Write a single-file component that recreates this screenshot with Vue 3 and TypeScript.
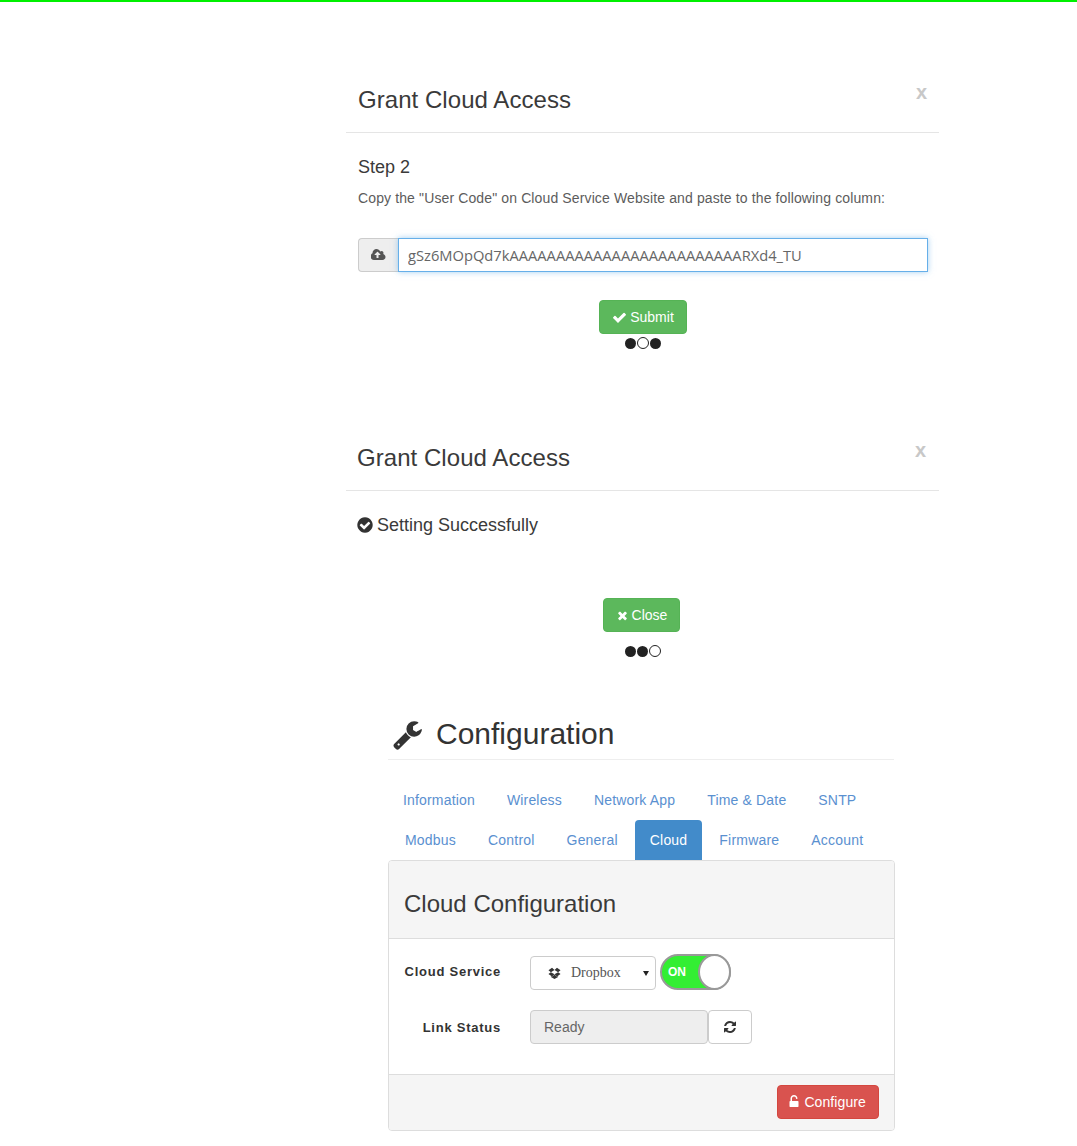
<template>
  <div class="page">
    <div class="top-line"></div>

    <section class="modal modal-first">
      <header class="modal-head">
        <h4>Grant Cloud Access</h4>
        <span class="close-x">x</span>
      </header>
      <div class="modal-body">
        <h5 class="step">Step 2</h5>
        <p class="hint">Copy the "User Code" on Cloud Service Website and paste to the following column:</p>
        <div class="code-group">
          <span class="addon">
            <svg class="ico-cloud" viewBox="0 0 1920 1792"><path :d="icons.cloudUpload" /></svg>
          </span>
          <input class="code-input" type="text" :value="userCode" />
        </div>
        <div class="actions actions-submit">
          <button class="btn green submit">
            <svg class="ico-check" viewBox="0 0 1792 1792"><path :d="icons.check" /></svg>
            Submit
          </button>
        </div>
        <div class="dots">
          <span v-for="n in 3" :key="n" :class="n === 2 ? 'dot open' : 'dot'"></span>
        </div>
      </div>
    </section>

    <section class="modal modal-second">
      <header class="modal-head">
        <h4>Grant Cloud Access</h4>
        <span class="close-x">x</span>
      </header>
      <div class="modal-body">
        <div class="success">
          <svg class="ico-ok" viewBox="0 0 1792 1792"><path :d="icons.checkCircle" /></svg>
          Setting Successfully
        </div>
        <div class="actions actions-close">
          <button class="btn green close-btn">
            <svg class="ico-times" viewBox="0 0 1792 1792"><path :d="icons.times" /></svg>
            Close
          </button>
        </div>
        <div class="dots dots-low">
          <span v-for="n in 3" :key="n" :class="n === 3 ? 'dot open' : 'dot'"></span>
        </div>
      </div>
    </section>

    <section class="config">
      <h1 class="config-title">
        <svg class="ico-wrench" viewBox="0 0 1792 1792"><path :d="icons.wrench" /></svg>
        Configuration
      </h1>
      <nav class="tabs">
        <div v-for="(row, i) in tabRows" :key="i" :class="['tab-row', 'tab-row-' + i]">
          <a v-for="tab in row" :key="tab" :class="['tab', { active: tab === 'Cloud' }]">{{ tab }}</a>
        </div>
      </nav>
      <div class="panel">
        <div class="panel-head"><h3>Cloud Configuration</h3></div>
        <div class="panel-body">
          <div class="form-row first-row">
            <label class="label">Cloud Service</label>
            <div class="select-box">
              <svg class="ico-dropbox" viewBox="0 0 1792 1792"><path :d="icons.dropbox" /></svg>
              <span class="select-text">Dropbox</span>
              <span class="select-caret"></span>
            </div>
            <div class="switch">
              <span class="switch-text">ON</span>
              <span class="knob"></span>
            </div>
          </div>
          <div class="form-row second-row">
            <label class="label">Link Status</label>
            <div class="status-box">Ready</div>
            <button class="refresh">
              <svg class="ico-refresh" viewBox="0 0 1792 1792"><path :d="icons.refresh" /></svg>
            </button>
          </div>
        </div>
        <div class="panel-foot">
          <button class="btn red">
            <svg class="ico-unlock" viewBox="0 0 1792 1792"><path :d="icons.unlock" /></svg>
            Configure
          </button>
        </div>
      </div>
    </section>
  </div>
</template>

<script setup lang="ts">
const userCode = "gSz6MOpQd7kAAAAAAAAAAAAAAAAAAAAAAAAARXd4_TU";

const tabRows: string[][] = [
  ["Information", "Wireless", "Network App", "Time & Date", "SNTP"],
  ["Modbus", "Control", "General", "Cloud", "Firmware", "Account"],
];

// font-awesome 4 glyph shapes
const icons = {
  cloudUpload:
    "M1216 864q0-14-9-23l-352-352q-9-9-23-9t-23 9l-351 351q-10 12-10 24 0 14 9 23t23 9h224v352q0 13 9.5 22.5t22.5 9.5h192q13 0 22.5-9.5t9.5-22.5v-352h224q13 0 22.5-9.5t9.5-22.5zm640 288q0 159-112.5 271.5t-271.5 112.5h-1088q-185 0-316.5-131.5t-131.5-316.5q0-130 70-240t188-165q-2-30-2-43 0-212 150-362t362-150q156 0 285.5 87t188.5 231q71-62 166-62 106 0 181 75t75 181q0 76-41 138 130 31 213.5 135.5t83.5 238.5z",
  check:
    "M1671 566q0 40-28 68l-724 724-136 136q-28 28-68 28t-68-28l-136-136-362-362q-28-28-28-68t28-68l136-136q28-28 68-28t68 28l294 295 656-657q28-28 68-28t68 28l136 136q28 28 28 68z",
  checkCircle:
    "M1412 734q0-28-18-46l-91-90q-19-19-45-19t-45 19l-408 407-226-226q-19-19-45-19t-45 19l-91 90q-18 18-18 46 0 27 18 45l362 362q19 19 45 19 27 0 46-19l543-543q18-18 18-45zm252 162q0 209-103 385.5t-279.5 279.5-385.5 103-385.5-103-279.5-279.5-103-385.5 103-385.5 279.5-279.5 385.5-103 385.5 103 279.5 279.5 103 385.5z",
  times:
    "M1490 1322q0 40-28 68l-136 136q-28 28-68 28t-68-28l-294-294-294 294q-28 28-68 28t-68-28l-136-136q-28-28-28-68t28-68l294-294-294-294q-28-28-28-68t28-68l136-136q28-28 68-28t68 28l294 294 294-294q28-28 68-28t68 28l136 136q28 28 28 68t-28 68l-294 294 294 294q28 28 28 68z",
  wrench:
    "M448 1472q0-26-19-45t-45-19-45 19-19 45 19 45 45 19 45-19 19-45zm644-420l-682 682q-37 37-90 37-52 0-91-37l-106-108q-38-36-38-90 0-53 38-91l681-681q39 98 114.5 173.5t173.5 114.5zm634-435q0 39-23 106-47 134-164.5 217.5t-258.5 83.5q-185 0-316.5-131.5t-131.5-316.5 131.5-316.5 316.5-131.5q58 0 121.5 16.5t107.5 46.5q16 11 16 28t-16 28l-293 169v224l193 107q5-3 79-48.5t135.5-81 70.5-35.5q15 0 23.5 10t8.5 25z",
  dropbox:
    "M402 707l494 305-342 285-490-319zm986 555v108l-490 293v1l-1-1-1 1v-1l-489-293v-108l147 96 342-284v-2l1 1 1-1v2l343 284zm-834-1144l342 285-494 304-338-270zm836 589l338 271-489 319-343-285zm-151-589l489 319-338 270-494-304z",
  refresh:
    "M1639 1056q0 5-1 7-64 268-268 434.5t-478 166.5q-146 0-282.5-55t-243.5-157l-129 129q-19 19-45 19t-45-19-19-45v-448q0-26 19-45t45-19h448q26 0 45 19t19 45-19 45l-137 137q71 66 161 102t187 36q134 0 250-65t186-179q11-17 53-117 8-23 30-23h192q13 0 22.5 9.5t9.5 22.5zm25-800v448q0 26-19 45t-45 19h-448q-26 0-45-19t-19-45 19-45l138-138q-148-137-349-137-134 0-250 65t-186 179q-11 17-53 117-8 23-30 23h-199q-13 0-22.5-9.5t-9.5-22.5v-7q65-268 270-434.5t480-166.5q146 0 284 55.5t245 156.5l130-129q19-19 45-19t45 19 19 45z",
  unlock:
    "M1376 768q40 0 68 28t28 68v576q0 40-28 68t-68 28h-960q-40 0-68-28t-28-68v-576q0-40 28-68t68-28h32v-320q0-185 131.5-316.5t316.5-131.5 316.5 131.5 131.5 316.5q0 26-19 45t-45 19h-64q-26 0-45-19t-19-45q0-106-75-181t-181-75-181 75-75 181v320h736z",
};
</script>

<style>
html,
body {
  background: #fff;
}
</style>

<style scoped>
.page {
  height: 1146px;
  overflow: hidden;
  font-family: "Liberation Sans", Arial, sans-serif;
  color: #333;
  font-size: 14px;
}

.top-line {
  height: 2px;
  background: #00f000;
}

svg {
  fill: currentColor;
  display: inline-block;
  flex: none;
}

/* dialogs */
.modal {
  width: 593px;
  margin-left: 346px;
}

.modal-first {
  margin-top: 70px;
}

.modal-second {
  margin-top: 81px;
}

.modal-head {
  display: flex;
  justify-content: space-between;
  align-items: flex-start;
  padding: 11px 12px 15px;
  border-bottom: 1px solid #e5e5e5;
}

.modal-second .modal-head {
  padding-left: 11px;
  padding-right: 13px;
}

.modal-head h4 {
  margin: 0;
  font-size: 24px;
  font-weight: 400;
  letter-spacing: 0.05px;
  line-height: 34px;
  color: #3a3a3a;
}

.close-x {
  font-size: 20px;
  font-weight: 700;
  line-height: 18px;
  color: #c8c8c8;
}

.modal-body {
  padding: 0 11px 0 12px;
}

.step {
  margin: 24px 0 0;
  font-size: 18px;
  font-weight: 400;
  line-height: 20px;
  color: #3a3a3a;
}

.hint {
  margin: 11px 0 0;
  font-size: 14px;
  letter-spacing: 0.125px;
  line-height: 20px;
  color: #5c5c5c;
}

.code-group {
  display: flex;
  height: 34px;
  margin-top: 30px;
}

.addon {
  width: 40px;
  display: flex;
  align-items: center;
  justify-content: center;
  box-sizing: border-box;
  background: #eee;
  border: 1px solid #ccc;
  border-right: 0;
  border-radius: 4px 0 0 4px;
  color: #555;
}

.ico-cloud {
  width: 15px;
  height: 14px;
}

.code-input {
  flex: 1;
  min-width: 0;
  box-sizing: border-box;
  padding: 0 9px;
  font-family: "Open Sans", sans-serif;
  font-size: 14.7px;
  color: #666;
  background: #fff;
  border: 1px solid #66afe9;
  outline: 0;
  box-shadow: 0 0 6px rgba(102, 175, 233, 0.6);
}

.actions {
  display: flex;
  justify-content: center;
}

.actions-submit {
  margin-top: 28px;
}

.actions-close {
  margin-top: 63px;
  padding-right: 3px;
}

.btn {
  display: inline-flex;
  align-items: center;
  justify-content: center;
  gap: 3px;
  height: 34px;
  box-sizing: border-box;
  padding: 0 12px;
  font-family: inherit;
  font-size: 14px;
  color: #fff;
  border: 1px solid transparent;
  border-radius: 4px;
}

.green {
  background: #5cb85c;
  border-color: #55b355;
}

.red {
  background: #d9534f;
  border-color: #d4473f;
  letter-spacing: 0.1px;
}

.ico-check {
  width: 15px;
  height: 15px;
}

.ico-times {
  width: 13px;
  height: 13px;
}

.ico-unlock {
  width: 14px;
  height: 14px;
  margin-left: -3px;
}

.dots {
  display: flex;
  justify-content: center;
  align-items: center;
  height: 12px;
  margin-top: 3px;
}

.dots-low {
  margin-top: 13px;
}

.dot {
  width: 11px;
  height: 11px;
  border-radius: 50%;
  background: #222;
  margin: 0 0.5px;
}

.dot.open {
  box-sizing: border-box;
  width: 12px;
  height: 12px;
  background: #fff;
  border: 1px solid #222;
}

.success {
  display: flex;
  align-items: center;
  gap: 3px;
  margin-top: 24px;
  font-size: 18px;
  line-height: 20px;
  color: #3a3a3a;
}

.ico-ok {
  width: 18px;
  height: 18px;
  margin-left: -2px;
  color: #333;
}

/* configuration */
.config {
  width: 507px;
  margin: 48px 0 0 388px;
}

.config-title {
  display: flex;
  align-items: center;
  gap: 13px;
  height: 50px;
  margin: 0 1px 0 0;
  padding: 4px 0 0 4px;
  font-size: 30px;
  font-weight: 400;
  border-bottom: 1px solid #eee;
}

.ico-wrench {
  width: 31px;
  height: 31px;
  color: #333;
}

.tabs {
  margin-top: 20px;
}

.tab-row {
  display: flex;
  gap: 2px;
}

.tab-row-1 {
  padding-left: 2px;
}

.tab {
  height: 40px;
  box-sizing: border-box;
  padding: 0 15px;
  line-height: 40px;
  letter-spacing: 0.17px;
  color: #5a90d0;
  border-radius: 4px 4px 0 0;
  white-space: nowrap;
}

.tab-row-1 .tab {
  letter-spacing: 0.2px;
}

.tab.active {
  background: #428bca;
  color: #fff;
}

.panel {
  border: 1px solid #ddd;
  border-radius: 4px;
}

.panel-head {
  height: 78px;
  display: flex;
  align-items: center;
  padding: 9px 15px 0;
  box-sizing: border-box;
  background: #f5f5f5;
  border-bottom: 1px solid #ddd;
  border-radius: 3px 3px 0 0;
}

.panel-head h3 {
  margin: 0;
  font-size: 24px;
  font-weight: 400;
  color: #3a3a3a;
}

.panel-body {
  height: 135px;
  box-sizing: border-box;
  padding-top: 17px;
}

.form-row {
  display: flex;
  align-items: center;
  height: 34px;
}

.second-row {
  margin-top: 20px;
}

.label {
  width: 112px;
  margin-right: 29px;
  text-align: right;
  font-size: 13px;
  font-weight: 700;
  letter-spacing: 0.75px;
}

.first-row .label {
  margin-top: -4px;
}

.select-box {
  width: 126px;
  height: 34px;
  box-sizing: border-box;
  display: flex;
  align-items: center;
  padding-left: 17px;
  background: #fff;
  border: 1px solid #ccc;
  border-radius: 4px;
  position: relative;
}

.ico-dropbox {
  width: 13px;
  height: 13px;
  color: #333;
}

.select-text {
  margin-left: 10px;
  font-family: "Liberation Serif", serif;
  font-size: 14px;
  color: #555;
}

.select-caret {
  position: absolute;
  right: 6px;
  top: 14px;
  width: 0;
  height: 0;
  border: 3px solid transparent;
  border-top: 5px solid #222;
  border-bottom: 0;
}

.switch {
  width: 71px;
  height: 36px;
  box-sizing: border-box;
  margin: -3px 0 0 4px;
  border: 2px solid #999;
  border-radius: 18px;
  background: #33ee33;
  position: relative;
  display: flex;
  align-items: center;
  padding-left: 6px;
}

.switch-text {
  color: #fff;
  font-size: 12px;
  font-weight: 700;
}

.knob {
  position: absolute;
  right: -2px;
  top: -2px;
  width: 33px;
  height: 36px;
  box-sizing: border-box;
  background: #fff;
  border: 2px solid #999;
  border-radius: 50%;
}

.status-box {
  width: 178px;
  height: 34px;
  box-sizing: border-box;
  padding: 0 13px;
  line-height: 32px;
  background: #eee;
  color: #666;
  border: 1px solid #ccc;
  border-radius: 4px;
}

.refresh {
  width: 44px;
  height: 34px;
  box-sizing: border-box;
  display: flex;
  align-items: center;
  justify-content: center;
  background: #fff;
  border: 1px solid #ccc;
  border-radius: 4px;
  color: #333;
  padding: 0;
}

.ico-refresh {
  width: 14px;
  height: 14px;
}

.panel-foot {
  height: 56px;
  box-sizing: border-box;
  display: flex;
  justify-content: flex-end;
  padding: 10px 15px;
  background: #f5f5f5;
  border-top: 1px solid #ddd;
  border-radius: 0 0 3px 3px;
}
</style>
